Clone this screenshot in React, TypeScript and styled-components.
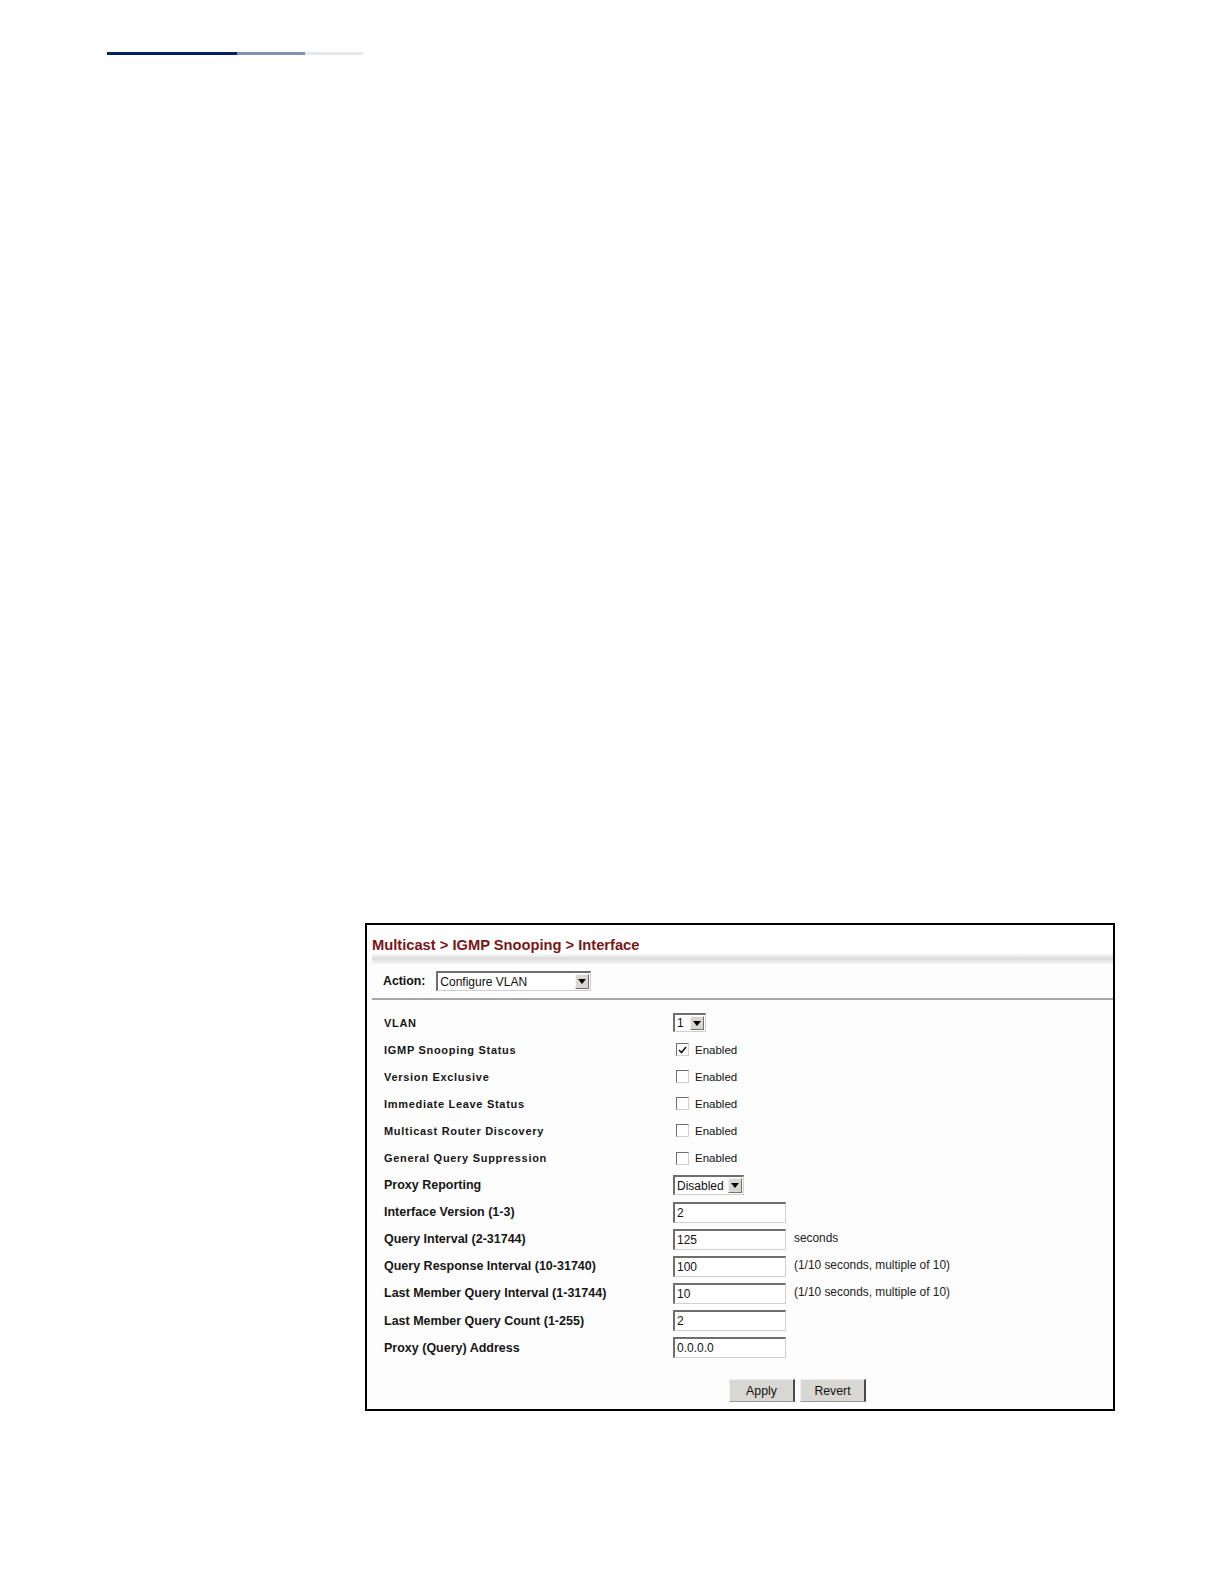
import React from "react";
import styled, { createGlobalStyle } from "styled-components";

const GlobalStyle = createGlobalStyle`
  html, body {
    margin: 0;
    padding: 0;
    background: #ffffff;
    font-family: "Liberation Sans", Arial, sans-serif;
  }
`;

const Page = styled.div`
  width: 1224px;
  height: 1584px;
  box-sizing: border-box;
  padding-top: 52px;
`;

const TopRule = styled.div`
  display: flex;
  margin-left: 107px;
  height: 3px;
`;

const RuleSegment = styled.div<{ w: number; color: string }>`
  width: ${(p) => p.w}px;
  background: ${(p) => p.color};
`;

const Panel = styled.div`
  margin-top: 868px;
  margin-left: 365px;
  width: 750px;
  height: 488px;
  box-sizing: border-box;
  border: 2px solid #000;
  display: flex;
  flex-direction: column;
  background: #fdfdfd;
`;

const Title = styled.div`
  height: 28px;
  padding-left: 5px;
  display: flex;
  align-items: flex-end;
  font-size: 14.7px;
  font-weight: bold;
  color: #7a1616;
  background: #fff;
`;

const Band = styled.div`
  margin-left: 5px;
  height: 11px;
  background: linear-gradient(#ffffff, #dcdcdc 50%, #f4f4f4);
`;

const ActionRow = styled.div`
  height: 34px;
  display: flex;
  align-items: center;
  gap: 11px;
  border-bottom: 2px solid #a6a6a6;
  margin-left: 5px;
  padding-left: 11px;
`;

const ActionLabel = styled.span`
  font-size: 12.3px;
  font-weight: bold;
  color: #111;
`;

const SelectBox = styled.div<{ w: number; h: number }>`
  width: ${(p) => p.w}px;
  height: ${(p) => p.h}px;
  box-sizing: border-box;
  display: flex;
  align-items: stretch;
  background: #fff;
  border-top: 2px solid #6e6e6e;
  border-left: 2px solid #6e6e6e;
  border-bottom: 1px solid #cfcfcf;
  border-right: 1px solid #cfcfcf;
`;

const SelectText = styled.span`
  flex: 1;
  display: flex;
  align-items: center;
  padding-left: 2px;
  font-size: 12px;
  color: #111;
`;

const ArrowButton = styled.span`
  width: 14px;
  box-sizing: border-box;
  margin: 1px;
  display: flex;
  align-items: center;
  justify-content: center;
  background: #d8d6d0;
  border-top: 1px solid #f4f4f4;
  border-left: 1px solid #f4f4f4;
  border-right: 1px solid #707070;
  border-bottom: 1px solid #707070;
`;

const Form = styled.div`
  padding-top: 9px;
  padding-left: 17px;
  display: grid;
  grid-template-columns: 289px 1fr;
  grid-auto-rows: 27.1px;
`;

const Label = styled.div<{ compact?: boolean }>`
  display: flex;
  align-items: center;
  font-size: ${(p) => (p.compact ? "11px" : "12.5px")};
  letter-spacing: ${(p) => (p.compact ? "0.7px" : "0")};
  font-weight: bold;
  color: #161616;
`;

const Control = styled.div`
  display: flex;
  align-items: center;
  gap: 8px;
`;

const CheckWrap = styled.label`
  display: flex;
  align-items: center;
  gap: 6px;
  padding-left: 3px;
  font-size: 11.5px;
  color: #111;
`;

const CheckBox = styled.span`
  width: 13px;
  height: 13px;
  box-sizing: border-box;
  display: flex;
  align-items: center;
  justify-content: center;
  background: #fff;
  border-top: 1px solid #6e6e6e;
  border-left: 1px solid #6e6e6e;
  border-right: 1px solid #d0d0d0;
  border-bottom: 1px solid #d0d0d0;
`;

const TextInput = styled.div`
  width: 113px;
  height: 21px;
  box-sizing: border-box;
  display: flex;
  align-items: center;
  padding-left: 2px;
  font-size: 12px;
  color: #111;
  background: #fff;
  border-top: 2px solid #6e6e6e;
  border-left: 2px solid #6e6e6e;
  border-right: 1px solid #cfcfcf;
  border-bottom: 1px solid #cfcfcf;
`;

const Note = styled.span`
  font-size: 11.9px;
  color: #222;
  margin-top: -2px;
`;

const Buttons = styled.div`
  margin-top: auto;
  margin-bottom: 7px;
  padding-left: 362px;
  display: flex;
  gap: 5px;
`;

const Button = styled.button`
  width: 66px;
  height: 23px;
  padding: 0;
  font-family: "Liberation Sans", Arial, sans-serif;
  font-size: 12.3px;
  color: #111;
  background: #d9d7d1;
  border: none;
  border-right: 2px solid #4a4a4a;
  border-top: 1px solid #efefef;
  border-left: 1px solid #efefef;
  border-bottom: 1px solid #9a9a9a;
`;

const Arrow = () => (
  <svg width="8" height="5" viewBox="0 0 8 5">
    <path d="M0 0 H8 L4 5 Z" fill="#000" />
  </svg>
);

const Tick = () => (
  <svg width="9" height="8" viewBox="0 0 9 8">
    <path d="M1 4 L3.5 6.5 L8 1" fill="none" stroke="#111" strokeWidth="1.6" />
  </svg>
);

const Select = ({ value, w, h }: { value: string; w: number; h: number }) => (
  <SelectBox w={w} h={h}>
    <SelectText>{value}</SelectText>
    <ArrowButton>
      <Arrow />
    </ArrowButton>
  </SelectBox>
);

const Check = ({ checked }: { checked?: boolean }) => (
  <CheckWrap>
    <CheckBox>{checked && <Tick />}</CheckBox>
    Enabled
  </CheckWrap>
);

const fields = [
  { label: "Interface Version (1-3)", value: "2" },
  { label: "Query Interval (2-31744)", value: "125", note: "seconds" },
  { label: "Query Response Interval (10-31740)", value: "100", note: "(1/10 seconds, multiple of 10)" },
  { label: "Last Member Query Interval (1-31744)", value: "10", note: "(1/10 seconds, multiple of 10)" },
  { label: "Last Member Query Count (1-255)", value: "2" },
  { label: "Proxy (Query) Address", value: "0.0.0.0" },
];

const checks = [
  { label: "IGMP Snooping Status", checked: true },
  { label: "Version Exclusive" },
  { label: "Immediate Leave Status" },
  { label: "Multicast Router Discovery" },
  { label: "General Query Suppression" },
];

export default function App() {
  return (
    <>
      <GlobalStyle />
      <Page>
        <TopRule>
          <RuleSegment w={130} color="#04225f" />
          <RuleSegment w={68} color="#8590ab" />
          <RuleSegment w={58} color="#e5e7ec" />
        </TopRule>
        <Panel>
          <Title>Multicast &gt; IGMP Snooping &gt; Interface</Title>
          <Band />
          <ActionRow>
            <ActionLabel>Action:</ActionLabel>
            <Select value="Configure VLAN" w={155} h={20} />
          </ActionRow>
          <Form>
            <Label compact>VLAN</Label>
            <Control>
              <Select value="1" w={33} h={19} />
            </Control>
            {checks.map((c) => (
              <React.Fragment key={c.label}>
                <Label compact>{c.label}</Label>
                <Control>
                  <Check checked={c.checked} />
                </Control>
              </React.Fragment>
            ))}
            <Label>Proxy Reporting</Label>
            <Control>
              <Select value="Disabled" w={71} h={20} />
            </Control>
            {fields.map((f) => (
              <React.Fragment key={f.label}>
                <Label>{f.label}</Label>
                <Control>
                  <TextInput>{f.value}</TextInput>
                  {f.note && <Note>{f.note}</Note>}
                </Control>
              </React.Fragment>
            ))}
          </Form>
          <Buttons>
            <Button>Apply</Button>
            <Button>Revert</Button>
          </Buttons>
        </Panel>
      </Page>
    </>
  );
}
